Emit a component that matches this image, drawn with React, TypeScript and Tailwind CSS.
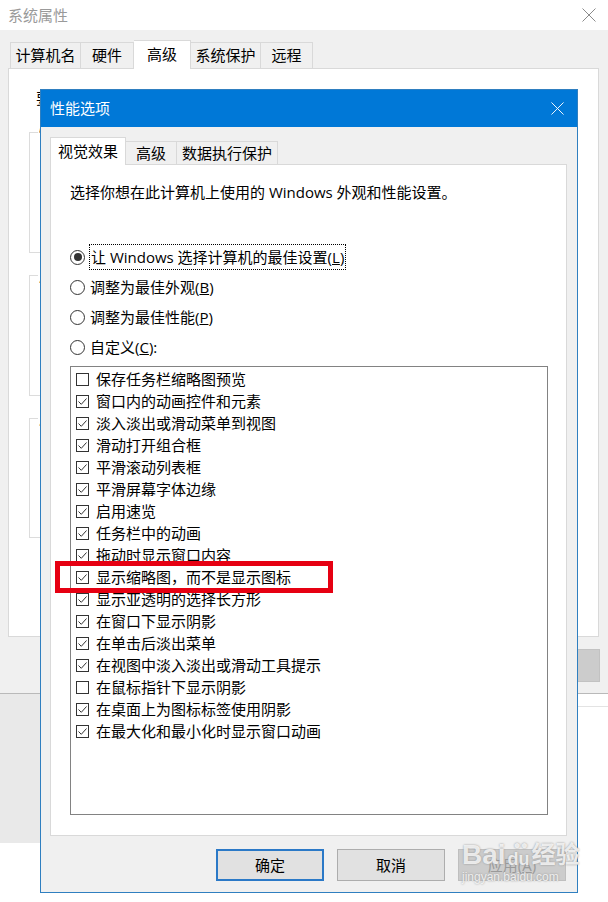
import React from 'react';

const items: [string, boolean][] = [
  ['保存任务栏缩略图预览', false],
  ['窗口内的动画控件和元素', true],
  ['淡入淡出或滑动菜单到视图', true],
  ['滑动打开组合框', true],
  ['平滑滚动列表框', true],
  ['平滑屏幕字体边缘', true],
  ['启用速览', true],
  ['任务栏中的动画', true],
  ['拖动时显示窗口内容', true],
  ['显示缩略图，而不是显示图标', true],
  ['显示亚透明的选择长方形', true],
  ['在窗口下显示阴影', true],
  ['在单击后淡出菜单', true],
  ['在视图中淡入淡出或滑动工具提示', true],
  ['在鼠标指针下显示阴影', false],
  ['在桌面上为图标标签使用阴影', true],
  ['在最大化和最小化时显示窗口动画', true],
];

const CloseIcon = ({ color, size }: { color: string; size: number }) => (
  <svg width={size} height={size} viewBox="0 0 14 14">
    <path d="M0.5 0.5 L13.5 13.5 M13.5 0.5 L0.5 13.5" stroke={color} strokeWidth="1" fill="none" />
  </svg>
);

const Checkbox = ({ checked }: { checked: boolean }) => (
  <div className="w-[13px] h-[13px] border border-[#333333] bg-white flex items-center justify-center shrink-0">
    {checked && (
      <svg width="11" height="11" viewBox="0 0 11 11">
        <path d="M1.5 5.5 L4.3 8.3 L9.5 2.5" stroke="#333333" strokeWidth="1" fill="none" />
      </svg>
    )}
  </div>
);

const Radio = ({ checked }: { checked?: boolean }) => (
  <div className="w-[15px] h-[15px] rounded-full border border-[#333333] bg-white flex items-center justify-center shrink-0">
    {checked && <div className="w-[8px] h-[8px] rounded-full bg-[#333333]" />}
  </div>
);

const GroupBox = ({ label, className }: { label: string; className: string }) => (
  <fieldset className={`border border-[#dcdcdc] ml-[20px] w-[540px] ${className}`}>
    <legend className="ml-[8px] px-[1px] text-[15px] leading-[20px]">{label}</legend>
  </fieldset>
);

export default function App() {
  return (
    <div className="relative w-[608px] h-[902px] overflow-hidden bg-white text-black font-['Open_Sans','Noto_Sans_CJK_SC',sans-serif]">
      {/* 系统属性 (background window) */}
      <div className="h-[30px] bg-white flex items-center justify-between pl-[8px] pr-[12px]">
        <span className="text-[15px] text-[#9a9a9a]">系统属性</span>
        <CloseIcon color="#8a8a8a" size={14} />
      </div>
      <div className="h-[664px] bg-[#f0f0f0] border-b border-[#b9b9b9]">
        <div className="h-[38px] flex items-end pl-[10px]">
          <div className="w-[71px] h-[26px] border border-b-0 border-[#d9d9d9] flex items-center justify-center text-[15px]">计算机名</div>
          <div className="w-[53px] h-[26px] border border-b-0 border-l-0 border-[#d9d9d9] flex items-center justify-center text-[15px]">硬件</div>
          <div className="relative z-10 -mb-px w-[57px] h-[29px] bg-white border border-b-0 border-l-0 border-[#d9d9d9] flex items-start justify-center pt-[2px] text-[15px]">高级</div>
          <div className="w-[70px] h-[26px] border border-b-0 border-l-0 border-[#d9d9d9] flex items-center justify-center text-[15px]">系统保护</div>
          <div className="w-[52px] h-[26px] border border-b-0 border-l-0 border-[#d9d9d9] flex items-center justify-center text-[15px]">远程</div>
        </div>
        <div className="ml-[8px] w-[591px] h-[569px] bg-white border border-[#d9d9d9] pt-[19px]">
          <div className="pl-[27px] text-[15px] leading-[20px]">要进行大多数更改，你必须作为管理员登录。</div>
          <GroupBox label="性能" className="mt-[14px] h-[131px]" />
          <GroupBox label="用户配置文件" className="mt-[12px] h-[131px]" />
          <GroupBox label="启动和故障恢复" className="mt-[12px] h-[130px]" />
        </div>
        <div className="mt-[12px] flex justify-end pr-[8px]">
          <div className="w-[80px] h-[33px] bg-[#cccccc] border border-[#c2c2c2]" />
        </div>
      </div>
      <div className="flex">
        <div className="w-[578px]">
          <div className="h-[149px] bg-[#e9e9e9]" />
        </div>
        <div className="flex-1 mt-[12px] border-t border-[#e3e3e3]" />
      </div>

      {/* 性能选项 dialog */}
      <div className="absolute left-[40px] top-[89px] w-[538px] h-[804px] border border-[#2f7fc0] flex flex-col">
        <div className="h-[37px] bg-[#0078d7] flex items-center justify-between pl-[9px] pr-[13px]">
          <span className="text-[15px] text-white">性能选项</span>
          <CloseIcon color="#ffffff" size={13} />
        </div>
        <div className="flex-1 bg-[#f0f0f0]">
          <div className="h-[37px] flex items-end pl-[9px]">
            <div className="relative z-10 -mb-px w-[76px] h-[28px] bg-white border border-b-0 border-[#d9d9d9] flex items-start justify-center pt-[2px] text-[15px]">视觉效果</div>
            <div className="w-[51px] h-[23px] border border-b-0 border-l-0 border-[#d9d9d9] flex items-center justify-center text-[15px]">高级</div>
            <div className="w-[101px] h-[23px] border border-b-0 border-l-0 border-[#d9d9d9] flex items-center justify-center text-[15px]">数据执行保护</div>
          </div>
          <div className="ml-[9px] w-[517px] h-[672px] bg-white border border-[#d9d9d9] pl-[19px] pt-[17px]">
            <div className="text-[15px] leading-[20px]">选择你想在此计算机上使用的 Windows 外观和性能设置。</div>
            <div className="mt-[40px] flex flex-col text-[15px]">
              <div className="h-[30px] flex items-center gap-[4px]">
                <Radio checked />
                <span className="border border-dotted border-black px-px leading-[24px]">
                  让 Windows 选择计算机的最佳设置(<u>L</u>)
                </span>
              </div>
              <div className="h-[30px] flex items-center gap-[5px]">
                <Radio />
                <span>调整为最佳外观(<u>B</u>)</span>
              </div>
              <div className="h-[30px] flex items-center gap-[5px]">
                <Radio />
                <span>调整为最佳性能(<u>P</u>)</span>
              </div>
              <div className="h-[30px] flex items-center gap-[5px]">
                <Radio />
                <span>自定义(<u>C</u>):</span>
              </div>
            </div>
            <div className="mt-[4px] w-[478px] h-[449px] border border-[#828282] bg-white pt-px pl-[5px]">
              {items.map(([label, checked]) => (
                <div key={label} className="h-[22px] flex items-center gap-[7px] text-[15px]">
                  <Checkbox checked={checked} />
                  <span className="whitespace-nowrap">{label}</span>
                </div>
              ))}
            </div>
          </div>
          <div className="mt-[13px] flex justify-end gap-[13px] pr-[11px]">
            <button className="w-[108px] h-[32px] bg-[#e1e1e1] border-2 border-[#2b79c7] text-[15px]">确定</button>
            <button className="w-[108px] h-[32px] bg-[#e1e1e1] border border-[#adadad] text-[15px]">取消</button>
            <button className="w-[108px] h-[32px] bg-[#cccccc] border border-[#bfbfbf] text-[15px] text-[#9a9a9a]">应用(<u>A</u>)</button>
          </div>
        </div>
      </div>

      {/* 红框标注 */}
      <div className="absolute left-[55px] top-[561px] w-[278px] h-[32px] border-[5px] border-[#e60012]" />

      {/* 百度经验水印 */}
      <div className="absolute left-[462px] top-[840px] flex flex-col items-start pointer-events-none">
        <div className="flex items-end text-[28px] leading-[30px] font-bold text-white/80 [text-shadow:0_0_2px_#8a8a8a] font-['Liberation_Sans','Noto_Sans_CJK_SC',sans-serif]">
          <span>Bai</span>
          <span className="relative text-[18px] leading-[22px] mx-[2px]">
            <span className="absolute -top-[14px] left-[6px] text-[12px] text-white/80">●●</span>
            du
          </span>
          <span className="text-[24px]">经验</span>
        </div>
        <div className="text-[12px] leading-[14px] text-white/80 [text-shadow:0_0_2px_#8a8a8a] font-['Liberation_Sans',sans-serif]">jingyan.baidu.com</div>
      </div>
    </div>
  );
}
